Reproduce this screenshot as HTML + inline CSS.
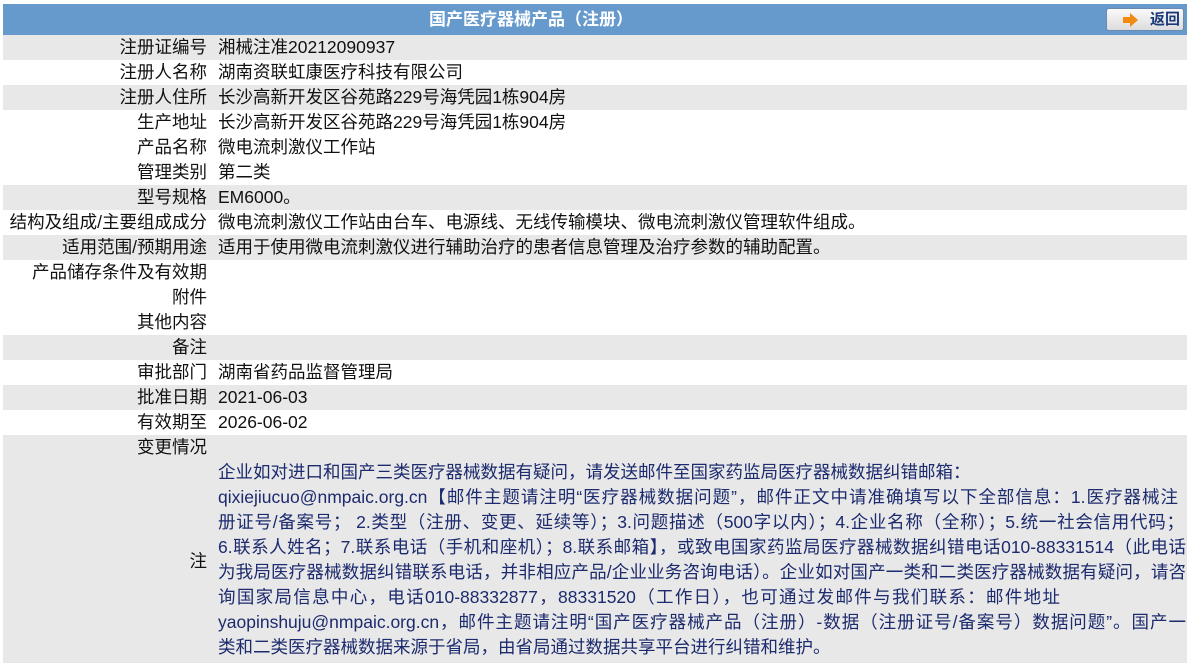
<!DOCTYPE html>
<html><head><meta charset="utf-8"><style>
body{margin:0;background:#fff;font-family:"Liberation Sans","Noto Sans CJK SC",sans-serif;font-size:17.5px;color:#111;}
.wrap{position:absolute;left:3px;top:4px;width:1184px;}
.hd{height:31px;background:#6699cc;color:#fff;font-weight:bold;text-align:center;line-height:31px;font-size:17px;position:relative;padding-right:128px;box-sizing:border-box;}
.btn{position:absolute;right:3px;top:4px;width:76px;height:21px;border:1px solid #6a8ab0;border-radius:3px;background:linear-gradient(#fafafa,#dcdcdc);line-height:21px;font-size:15px;color:#1a3a7a;font-weight:bold;text-align:left;}
.btn i{display:inline-block;width:0;height:0;border-left:8px solid #f08a10;border-top:7px solid transparent;border-bottom:7px solid transparent;vertical-align:middle;position:relative;margin-left:23px;margin-right:12px}
.btn i:before{content:"";position:absolute;left:-15px;top:-3px;width:8px;height:6px;background:#f08a10}
.r{display:flex;height:25px;line-height:25px;}
.g{background:#e8e8e8;}
.l{width:204px;text-align:right;white-space:nowrap;}
.v{margin-left:11px;white-space:nowrap;}
.note{display:flex;background:#e8e8e8;height:203px;}
.note .l{line-height:203px;}
.note .v{line-height:25px;color:#1c2a6e;width:968px;}
.j{text-align:justify;text-align-last:justify;white-space:nowrap;}
</style></head><body><div class="wrap">
<div class="hd">国产医疗器械产品（注册）<div class="btn"><i></i>返回</div></div>
<div class="r g"><div class="l">注册证编号</div><div class="v">湘械注准20212090937</div></div>
<div class="r"><div class="l">注册人名称</div><div class="v">湖南资联虹康医疗科技有限公司</div></div>
<div class="r g"><div class="l">注册人住所</div><div class="v">长沙高新开发区谷苑路229号海凭园1栋904房</div></div>
<div class="r"><div class="l">生产地址</div><div class="v">长沙高新开发区谷苑路229号海凭园1栋904房</div></div>
<div class="r"><div class="l">产品名称</div><div class="v">微电流刺激仪工作站</div></div>
<div class="r"><div class="l">管理类别</div><div class="v">第二类</div></div>
<div class="r g"><div class="l">型号规格</div><div class="v">EM6000。</div></div>
<div class="r"><div class="l">结构及组成/主要组成成分</div><div class="v">微电流刺激仪工作站由台车、电源线、无线传输模块、微电流刺激仪管理软件组成。</div></div>
<div class="r g"><div class="l">适用范围/预期用途</div><div class="v">适用于使用微电流刺激仪进行辅助治疗的患者信息管理及治疗参数的辅助配置。</div></div>
<div class="r"><div class="l">产品储存条件及有效期</div><div class="v"></div></div>
<div class="r"><div class="l">附件</div><div class="v"></div></div>
<div class="r"><div class="l">其他内容</div><div class="v"></div></div>
<div class="r g"><div class="l">备注</div><div class="v"></div></div>
<div class="r"><div class="l">审批部门</div><div class="v">湖南省药品监督管理局</div></div>
<div class="r g"><div class="l">批准日期</div><div class="v">2021-06-03</div></div>
<div class="r"><div class="l">有效期至</div><div class="v">2026-06-02</div></div>
<div class="r g"><div class="l">变更情况</div><div class="v"></div></div>
<div class="note"><div class="l">注</div><div class="v">
<div>企业如对进口和国产三类医疗器械数据有疑问，请发送邮件至国家药监局医疗器械数据纠错邮箱：</div>
<div class="j" style="width:960px">qixiejiucuo@nmpaic.org.cn【邮件主题请注明“医疗器械数据问题”，邮件正文中请准确填写以下全部信息：1.医疗器械注</div>
<div class="j" style="width:966px">册证号/备案号； 2.类型（注册、变更、延续等）；3.问题描述（500字以内）；4.企业名称（全称）；5.统一社会信用代码；</div>
<div class="j">6.联系人姓名；7.联系电话（手机和座机）；8.联系邮箱】，或致电国家药监局医疗器械数据纠错电话010-88331514（此电话</div>
<div class="j">为我局医疗器械数据纠错联系电话，并非相应产品/企业业务咨询电话）。企业如对国产一类和二类医疗器械数据有疑问，请咨</div>
<div class="j" style="width:842px">询国家局信息中心，电话010-88332877，88331520（工作日），也可通过发邮件与我们联系：邮件地址</div>
<div class="j">yaopinshuju@nmpaic.org.cn，邮件主题请注明“国产医疗器械产品（注册）-数据（注册证号/备案号）数据问题”。国产一</div>
<div>类和二类医疗器械数据来源于省局，由省局通过数据共享平台进行纠错和维护。</div>
</div></div>
</div></body></html>
